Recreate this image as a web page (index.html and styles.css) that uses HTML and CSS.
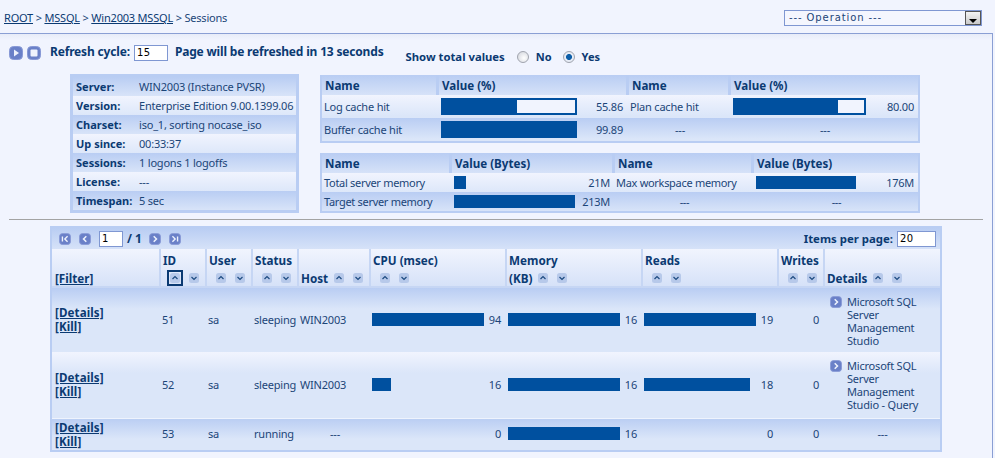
FILE: index.html
```html
<!DOCTYPE html>
<html lang="en">
<head>
<meta charset="utf-8">
<title>Sessions</title>
<link rel="stylesheet" href="styles.css">
</head>
<body>
<svg class="defs" width="0" height="0" aria-hidden="true">
  <symbol id="btn" viewBox="0 0 14 14"><rect x="0.5" y="0.5" width="13" height="13" rx="4" fill="#6a80c8" stroke="#8899d6"/></symbol>
  <symbol id="up" viewBox="0 0 10 10"><rect width="10" height="10" rx="2.5" fill="#b7c9ea"/><path d="M2.5 6 5 3.5 7.5 6" fill="none" stroke="#1c4a80" stroke-width="1.2"/></symbol>
  <symbol id="down" viewBox="0 0 10 10"><rect width="10" height="10" rx="2.5" fill="#b7c9ea"/><path d="M2.5 4 5 6.5 7.5 4" fill="none" stroke="#1c4a80" stroke-width="1.2"/></symbol>
</svg>
<div class="page">
  <header class="topbar">
    <nav class="crumbs"><a href="#">ROOT</a> &gt; <a href="#">MSSQL</a> &gt; <a href="#">Win2003 MSSQL</a> &gt; Sessions</nav>
    <div class="select"><span>--- Operation ---</span><i class="select-btn"><b></b></i></div>
  </header>
  <section class="refresh">
    <svg class="icon14" viewBox="0 0 14 14"><use href="#btn"/><path d="M5 3.5v7l5-3.5z" fill="#eef2fd"/></svg>
    <svg class="icon14 second" viewBox="0 0 14 14"><use href="#btn"/><rect x="3.5" y="3.5" width="7" height="7" rx="1" fill="#eef2fd"/></svg>
    <span class="strong refresh-label">Refresh cycle:</span>
    <span class="field cycle">15</span>
    <span class="strong refresh-msg">Page will be refreshed in 13 seconds</span>
    <span class="totals">
      <b class="total-label">Show total values</b>
      <i class="radio"></i><b class="opt">No</b>
      <i class="radio on"></i><b class="opt">Yes</b>
    </span>
  </section>
  <section class="summary">
    <table class="info">
      <tr class="blue"><th>Server:</th><td>WIN2003 (Instance PVSR)</td></tr>
      <tr class="light"><th>Version:</th><td>Enterprise Edition 9.00.1399.06</td></tr>
      <tr class="blue"><th>Charset:</th><td>iso_1, sorting nocase_iso</td></tr>
      <tr class="light"><th>Up since:</th><td>00:33:37</td></tr>
      <tr class="blue"><th>Sessions:</th><td>1 logons 1 logoffs</td></tr>
      <tr class="light"><th>License:</th><td>---</td></tr>
      <tr class="blue"><th>Timespan:</th><td>5 sec</td></tr>
    </table>
    <div class="stats">
      <table class="stat pct">
        <colgroup><col class="c1"><col class="c2"><col class="c3"><col class="c4"></colgroup>
        <tr class="head"><th>Name</th><th>Value (%)</th><th>Name</th><th>Value (%)</th></tr>
        <tr class="light"><td>Log cache hit</td><td><div class="cell-bar"><div class="track w136"><div class="fill" style="width:55.86%"></div></div><span>55.86</span></div></td><td>Plan cache hit</td><td><div class="cell-bar"><div class="track w133"><div class="fill" style="width:80%"></div></div><span>80.00</span></div></td></tr>
        <tr class="blue"><td>Buffer cache hit</td><td><div class="cell-bar"><div class="fill solid" style="width:136px"></div><span>99.89</span></div></td><td class="ctr">---</td><td class="ctr">---</td></tr>
      </table>
      <table class="stat mem">
        <colgroup><col class="c1"><col class="c2"><col class="c3"><col class="c4"></colgroup>
        <tr class="head"><th>Name</th><th>Value (Bytes)</th><th>Name</th><th>Value (Bytes)</th></tr>
        <tr class="light"><td>Total server memory</td><td><div class="cell-bar"><div class="fill solid" style="width:12px"></div><span>21M</span></div></td><td>Max workspace memory</td><td><div class="cell-bar"><div class="fill solid" style="width:100px"></div><span>176M</span></div></td></tr>
        <tr class="blue"><td>Target server memory</td><td><div class="cell-bar"><div class="fill solid" style="width:121px"></div><span>213M</span></div></td><td class="ctr">---</td><td class="ctr">---</td></tr>
      </table>
    </div>
  </section>
  <hr class="rule">
  <section class="grid">
    <div class="pager">
      <svg class="icon12" viewBox="0 0 14 14"><use href="#btn"/><path d="M4 4v6M10 3.8 6.8 7l3.2 3.2" fill="none" stroke="#eef2fd" stroke-width="1.6"/></svg>
      <svg class="icon12 gap" viewBox="0 0 14 14"><use href="#btn"/><path d="M8.5 3.8 5.3 7l3.2 3.2" fill="none" stroke="#eef2fd" stroke-width="1.8"/></svg>
      <span class="field page-no">1</span>
      <b class="of">/ 1</b>
      <svg class="icon12" viewBox="0 0 14 14"><use href="#btn"/><path d="M5.5 3.8 8.7 7l-3.2 3.2" fill="none" stroke="#eef2fd" stroke-width="1.8"/></svg>
      <svg class="icon12 gap" viewBox="0 0 14 14"><use href="#btn"/><path d="M10 4v6M4 3.8 7.2 7 4 10.2" fill="none" stroke="#eef2fd" stroke-width="1.6"/></svg>
      <b class="per-page">Items per page:</b>
      <span class="field items">20</span>
    </div>
    <table class="sessions">
      <colgroup><col class="g0"><col class="g1"><col class="g2"><col class="g3"><col class="g4"><col class="g5"><col class="g6"><col class="g7"><col class="g8"><col class="g9"></colgroup>
      <thead>
        <tr>
          <th><div class="sort tx"><a href="#">[Filter]</a></div></th>
          <th><div class="lbl">ID</div><div class="sort"><span class="sel"><svg viewBox="0 0 10 10"><use href="#up"/></svg></span><svg viewBox="0 0 10 10"><use href="#down"/></svg></div></th>
          <th><div class="lbl">User</div><div class="sort"><svg viewBox="0 0 10 10"><use href="#up"/></svg><svg viewBox="0 0 10 10"><use href="#down"/></svg></div></th>
          <th><div class="lbl">Status</div><div class="sort"><svg viewBox="0 0 10 10"><use href="#up"/></svg><svg viewBox="0 0 10 10"><use href="#down"/></svg></div></th>
          <th><div class="sort tx"><span class="t">Host</span><svg viewBox="0 0 10 10"><use href="#up"/></svg><svg viewBox="0 0 10 10"><use href="#down"/></svg></div></th>
          <th><div class="lbl">CPU (msec)</div><div class="sort"><svg viewBox="0 0 10 10"><use href="#up"/></svg><svg viewBox="0 0 10 10"><use href="#down"/></svg></div></th>
          <th><div class="lbl">Memory</div><div class="sort tx"><span class="t">(KB)</span><svg viewBox="0 0 10 10"><use href="#up"/></svg><svg viewBox="0 0 10 10"><use href="#down"/></svg></div></th>
          <th><div class="lbl">Reads</div><div class="sort"><svg viewBox="0 0 10 10"><use href="#up"/></svg><svg viewBox="0 0 10 10"><use href="#down"/></svg></div></th>
          <th><div class="lbl">Writes</div><div class="sort"><svg viewBox="0 0 10 10"><use href="#up"/></svg><svg viewBox="0 0 10 10"><use href="#down"/></svg></div></th>
          <th><div class="sort tx"><span class="t">Details</span><svg viewBox="0 0 10 10"><use href="#up"/></svg><svg viewBox="0 0 10 10"><use href="#down"/></svg></div></th>
        </tr>
      </thead>
      <tbody>
        <tr class="blue r1">
          <td class="links"><a href="#">[Details]</a><a href="#">[Kill]</a></td><td>51</td><td>sa</td><td>sleeping</td><td>WIN2003</td>
          <td><div class="cell-bar"><div class="fill solid" style="width:112px"></div><span>94</span></div></td>
          <td><div class="cell-bar"><div class="fill solid" style="width:112px"></div><span>16</span></div></td>
          <td><div class="cell-bar"><div class="fill solid" style="width:112px"></div><span>19</span></div></td>
          <td class="num">0</td>
          <td class="detail"><svg class="icon12" viewBox="0 0 14 14"><use href="#btn"/><path d="M5.5 3.8 8.7 7l-3.2 3.2" fill="none" stroke="#eef2fd" stroke-width="1.8"/></svg><span>Microsoft SQL Server Management Studio</span></td>
        </tr>
        <tr class="light r2">
          <td class="links"><a href="#">[Details]</a><a href="#">[Kill]</a></td><td>52</td><td>sa</td><td>sleeping</td><td>WIN2003</td>
          <td><div class="cell-bar"><div class="fill solid" style="width:19px"></div><span>16</span></div></td>
          <td><div class="cell-bar"><div class="fill solid" style="width:112px"></div><span>16</span></div></td>
          <td><div class="cell-bar"><div class="fill solid" style="width:106px"></div><span>18</span></div></td>
          <td class="num">0</td>
          <td class="detail"><svg class="icon12" viewBox="0 0 14 14"><use href="#btn"/><path d="M5.5 3.8 8.7 7l-3.2 3.2" fill="none" stroke="#eef2fd" stroke-width="1.8"/></svg><span>Microsoft SQL Server Management Studio - Query</span></td>
        </tr>
        <tr class="blue r3">
          <td class="links"><a href="#">[Details]</a><a href="#">[Kill]</a></td><td>53</td><td>sa</td><td>running</td><td class="ctr">---</td>
          <td><div class="cell-bar"><span>0</span></div></td>
          <td><div class="cell-bar"><div class="fill solid" style="width:112px"></div><span>16</span></div></td>
          <td><div class="cell-bar"><span>0</span></div></td>
          <td class="num">0</td>
          <td class="ctr">---</td>
        </tr>
      </tbody>
    </table>
  </section>
</div>
</body>
</html>
```

FILE: styles.css
```css
* { box-sizing: border-box; }
html, body { margin: 0; height: 100%; }
body {
  background: #f1f4fe;
  color: #1b4578;
  font: 11px/13px "Noto Sans", sans-serif;
  letter-spacing: -.2px;
  overflow: hidden;
}
.defs { position: absolute; }
a { color: #0b3a72; }
b, th, .strong { font-weight: 700; color: #0b3a72; letter-spacing: 0; }
.page { width: 993px; height: 458px; border-right: 1px solid #8a9fd4; }
.topbar {
  display: flex; justify-content: space-between; align-items: center;
  position: relative; background: #f1f4fe;
  height: 34px; margin-right: -1px; padding: 2px 11px 0 4px;
  border-bottom: 1px solid #8a9fd4;
}
.crumbs { letter-spacing: -.2px; }
.select {
  display: flex; justify-content: space-between; align-items: stretch;
  width: 198px; height: 16px; border: 1px solid #7f97d2; background: #f4f6fe;
  font-family: "DejaVu Sans", sans-serif; font-size: 10px; line-height: 14px;
  padding-left: 4px; letter-spacing: .9px;
}
.select-btn { width: 16px; background: linear-gradient(#f3f3f3, #c9c9c9); border: 1px solid #555; position: relative; }
.select-btn b { position: absolute; left: 3px; top: 7px; border: 4px solid transparent; border-top: 4px solid #000; border-bottom: 0; }
.refresh {
  display: flex; align-items: flex-start; height: 40px;
  padding: 12px 0 0 9px;
  background: linear-gradient(#e8ecf8, #f1f4fe) no-repeat 0 0 / 100% 6px;
}
.icon14 { width: 14px; height: 14px; flex: none; }
.second { margin-left: 4px; }
.strong { line-height: 14px; margin-top: -1px; }
.refresh-label { margin-left: 9px; font-size: 12px; letter-spacing: -.17px; }
.field {
  display: block; background: #fff; border: 1px solid #7f97d2; color: #000;
  font-family: "DejaVu Sans", sans-serif; font-size: 10px; line-height: 14px; padding-left: 2px;
  letter-spacing: .5px;
}
.cycle { width: 34px; height: 16px; margin: -1px 0 0 4px; }
.refresh-msg { margin-left: 7px; font-size: 12px; letter-spacing: -.18px; }
.totals { display: flex; align-items: center; position: relative; top: 4px; margin-left: 22px; }
.total-label { font-size: 11.3px; }
.opt { font-size: 11px; margin-left: 7px; }
.radio {
  width: 12px; height: 12px; border-radius: 50%; border: 1px solid #a0a4ae;
  background: radial-gradient(circle at 60% 60%, #fff, #cfd2da); margin-left: 12px;
}
.radio.on { background: radial-gradient(circle, #0d5ea8 0 2.6px, #e7ecf6 3.4px); margin-left: 11px; }
.summary { display: flex; align-items: flex-start; padding-left: 70px; }
table { border-collapse: separate; border-spacing: 0; table-layout: fixed; }
th, td { padding: 0; text-align: left; font-weight: 400; white-space: nowrap; }
th { font-weight: 700; }
.blue { background: #dbe6f9 linear-gradient(#b9cdf3, #dbe6f9) no-repeat 0 0 / 100% 21px; }
.light { background: #dbe6f9 linear-gradient(#f1f4fe, #dbe6f9) no-repeat 0 0 / 100% 21px; }
.info { width: 229px; height: 139px; border: 3px solid #b9cdf3; }
.info th { width: 63px; padding-left: 3px; height: 19px; font-size: 11px; }
.info td { padding-left: 3px; }
.stats { margin-left: 21px; margin-top: 1px; }
.stat { width: 600px; border: 2px solid #b9cdf3; border-top: 0; display: table; }
.stat th { height: 20px; padding-left: 3px; border-right: 3px solid #b9cdf3; font-size: 11.6px; }
.stat .head { background: linear-gradient(#b9cdf3, #d6e2f8); }
.stat .head th:last-child { border-right: 0; }
.stat td { padding: 0 2px; }
.stat td:nth-child(3):not(.ctr) { padding-left: 1px; }
.stat td:nth-child(4) { padding-right: 1px; }
.pct .c1 { width: 117px; } .pct .c2 { width: 190px; } .pct .c3 { width: 102px; } .pct .c4 { width: 187px; }
.pct tr:nth-child(2) { height: 23px; } .pct tr:nth-child(3) { height: 23px; }
.mem { margin-top: 10px; letter-spacing: -.3px; }
.mem .c1 { width: 130px; } .mem .c2 { width: 163px; } .mem .c3 { width: 139px; } .mem .c4 { width: 164px; }
.mem tr:nth-child(2), .mem tr:nth-child(3) { height: 19px; }
.cell-bar { display: flex; align-items: center; justify-content: space-between; gap: 4px; padding-right: 3px; }
.pct td:nth-child(2) .cell-bar { padding-right: 4px; }
.cell-bar span:only-child { margin-left: auto; }
.stat td:nth-child(4) .cell-bar { padding-right: 3px; }
.track { height: 17px; border: 2px solid #00509f; background: #f1f4fe; flex: none; }
.w136 { width: 136px; } .w133 { width: 133px; }
.fill { height: 100%; background: #00509f; }
.solid { height: 13px; flex: none; }
.pct .solid { height: 17px; }
.ctr { text-align: center; }
.rule { height: 1px; border: 0; margin: 6px 9px 0 9px; background: #a3a3a3; }
.grid { width: 892px; margin: 6px 0 0 50px; border: 2px solid #b9cdf3; }
.pager {
  display: flex; align-items: center; height: 21px; padding: 0 2px 0 7px;
  background: linear-gradient(#b9cdf3, #d6e2f8);
}
.icon12 { width: 12px; height: 12px; flex: none; }
.gap { margin-left: 8px; }
.page-no { width: 24px; height: 16px; margin-left: 8px; }
.of { font-size: 12px; margin: 0 7px 0 4px; }
.per-page { margin-left: auto; font-size: 11.4px; margin-right: 4px; }
.items { width: 39px; height: 16px; margin-right: 2px; }
.sessions { width: 888px; }
.g0 { width: 109px; } .g1, .g2, .g3 { width: 46px; } .g4 { width: 72px; } .g5, .g6, .g7 { width: 136px; } .g8 { width: 46px; } .g9 { width: 115px; }
.sessions thead th {
  height: 39px; vertical-align: bottom; padding: 0 0 0 2px; font-size: 11.7px;
  border-right: 2px solid #c6d6f4; border-bottom: 2px solid #c6d6f4;
  background: linear-gradient(#f1f4fe, #d6e2f8);
}
.sessions thead th:first-child { padding-left: 3px; }
.sessions thead th:last-child { border-right: 0; }
.lbl { height: 18px; line-height: 17px; }
.sort { display: flex; align-items: center; gap: 9px; height: 16px; padding-left: 7px; }
.sort.tx { padding-left: 0; }
.t { margin-right: -3px; }
.sort svg { width: 10px; height: 10px; flex: none; }
.sel { display: flex; flex: none; width: 16px; height: 16px; margin: 0 -3px; border: 2px solid #0b3a72; padding: 1px; }
.sessions tbody td { padding: 0 1px 2px; }
.r1 { height: 64px; } .r2 { height: 66px; } .r3 { height: 32px; }
.r3 td { border-top: 1px solid #eef3fd; }
.sessions .links { padding: 0 0 0 3px; }
.links a { display: block; font-weight: 700; font-size: 11.6px; line-height: 14px; letter-spacing: .1px; }
.sessions .num { text-align: right; padding-right: 6px; }
.sessions .cell-bar { padding-right: 5px; }
.sessions .detail { position: relative; padding: 7px 3px 0 22px; vertical-align: top; white-space: normal; }
.detail svg { position: absolute; left: 5px; top: 8px; }
.detail span { display: block; }
```
